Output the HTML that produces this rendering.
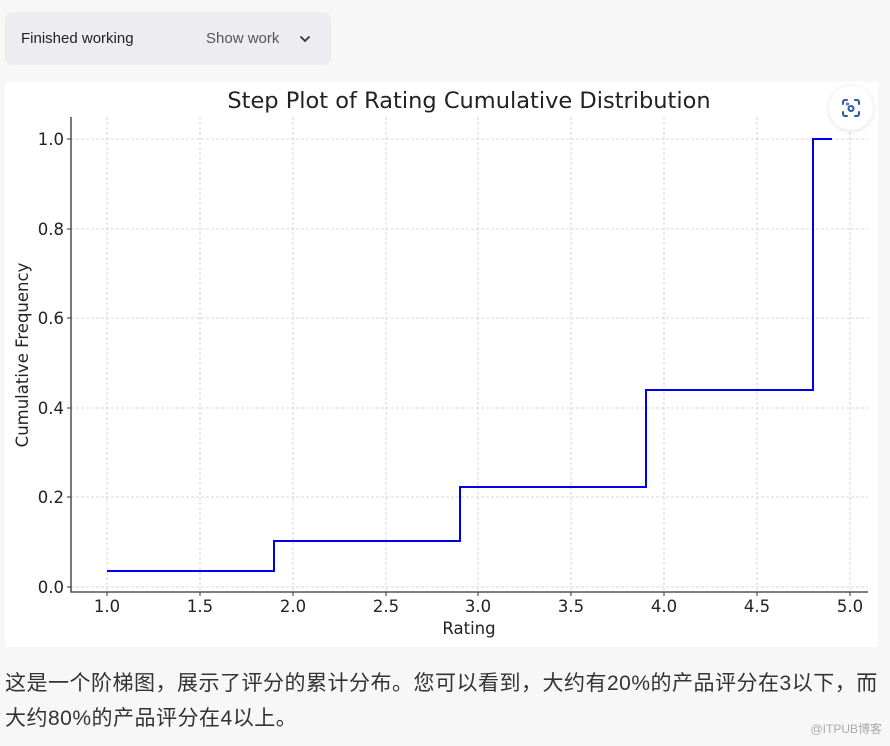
<!DOCTYPE html>
<html><head><meta charset="utf-8"><style>
body{margin:0;width:890px;height:746px;background:#f7f7f8;position:relative;overflow:hidden;font-family:"Liberation Sans","Noto Sans CJK SC",sans-serif}
.pill{position:absolute;left:5px;top:12px;width:326px;height:53px;background:#ececf1;border-radius:8px}
.pill .a{position:absolute;left:16px;top:18px;font-size:15px;color:#202123}
.pill .b{position:absolute;left:201px;top:18px;font-size:15px;color:#555}
.chart{position:absolute;left:5px;top:82px;width:873px;height:565px;background:#fff}
.btn{position:absolute;left:829px;top:86px;width:44px;height:44px;border-radius:50%;background:#fff;box-shadow:0 1px 6px rgba(0,0,0,.12)}
.txt{position:absolute;left:5px;top:666px;font-size:21px;color:#333;line-height:35px;width:885px;white-space:nowrap;letter-spacing:0.5px}
.wm{position:absolute;right:8px;top:720px;font-size:12px;color:#aaa}
</style></head><body>
<div class="pill"><span class="a">Finished working</span><span class="b">Show work</span>
<svg style="position:absolute;left:294px;top:21px" width="12" height="12" viewBox="0 0 12 12"><path d="M1.5 3.5 6 8 10.5 3.5" fill="none" stroke="#333" stroke-width="1.8"/></svg></div>
<div class="chart"></div>
<svg style="position:absolute;left:0;top:0" width="890" height="746" font-family="DejaVu Sans, sans-serif">
<g stroke="#ccc" stroke-width="0.8" stroke-dasharray="3,2">
<line x1="107" y1="117" x2="107" y2="592"/><line x1="200" y1="117" x2="200" y2="592"/><line x1="293" y1="117" x2="293" y2="592"/><line x1="386" y1="117" x2="386" y2="592"/><line x1="478" y1="117" x2="478" y2="592"/><line x1="571" y1="117" x2="571" y2="592"/><line x1="664" y1="117" x2="664" y2="592"/><line x1="757" y1="117" x2="757" y2="592"/><line x1="850" y1="117" x2="850" y2="592"/>
<line x1="71" y1="139" x2="868" y2="139"/><line x1="71" y1="229" x2="868" y2="229"/><line x1="71" y1="318" x2="868" y2="318"/><line x1="71" y1="408" x2="868" y2="408"/><line x1="71" y1="497" x2="868" y2="497"/><line x1="71" y1="587" x2="868" y2="587"/>
</g>
<path d="M107 571H274V541H460V487H646V390H813V139H832" fill="none" stroke="#0000e6" stroke-width="2"/>
<path d="M71 117V592H868" fill="none" stroke="#333" stroke-width="1.3"/>
<g stroke="#333"><line x1="67" y1="139" x2="71" y2="139"/><line x1="67" y1="229" x2="71" y2="229"/><line x1="67" y1="318" x2="71" y2="318"/><line x1="67" y1="408" x2="71" y2="408"/><line x1="67" y1="497" x2="71" y2="497"/><line x1="67" y1="587" x2="71" y2="587"/>
<line x1="107" y1="592" x2="107" y2="596"/><line x1="200" y1="592" x2="200" y2="596"/><line x1="293" y1="592" x2="293" y2="596"/><line x1="386" y1="592" x2="386" y2="596"/><line x1="478" y1="592" x2="478" y2="596"/><line x1="571" y1="592" x2="571" y2="596"/><line x1="664" y1="592" x2="664" y2="596"/><line x1="757" y1="592" x2="757" y2="596"/><line x1="850" y1="592" x2="850" y2="596"/></g>
<g font-size="16.5" fill="#222" text-anchor="end"><text x="64" y="145">1.0</text><text x="64" y="235">0.8</text><text x="64" y="324">0.6</text><text x="64" y="414">0.4</text><text x="64" y="503">0.2</text><text x="64" y="593">0.0</text></g>
<g font-size="16.5" fill="#222" text-anchor="middle"><text x="107" y="612">1.0</text><text x="200" y="612">1.5</text><text x="293" y="612">2.0</text><text x="386" y="612">2.5</text><text x="478" y="612">3.0</text><text x="571" y="612">3.5</text><text x="664" y="612">4.0</text><text x="757" y="612">4.5</text><text x="850" y="612">5.0</text>
<text x="469" y="634">Rating</text>
<text x="469" y="108" font-size="22.5">Step Plot of Rating Cumulative Distribution</text>
<text transform="translate(28,355) rotate(-90)">Cumulative Frequency</text></g>
</svg>
<div class="btn"><svg style="position:absolute;left:12px;top:12px" width="20" height="20" viewBox="0 0 20 20" fill="none" stroke="#2c5aa0" stroke-width="2" stroke-linecap="round"><path d="M2 6V4a2 2 0 0 1 2-2h2M14 2h2a2 2 0 0 1 2 2v2M18 14v2a2 2 0 0 1-2 2h-2M6 18H4a2 2 0 0 1-2-2v-2"/><circle cx="10" cy="10.5" r="2.5"/><circle cx="6.5" cy="6" r=".5"/></svg></div>
<div class="txt">这是一个阶梯图，展示了评分的累计分布。您可以看到，大约有20%的产品评分在3以下，而<br>大约80%的产品评分在4以上。</div>
<div class="wm">@ITPUB博客</div>
</body></html>
